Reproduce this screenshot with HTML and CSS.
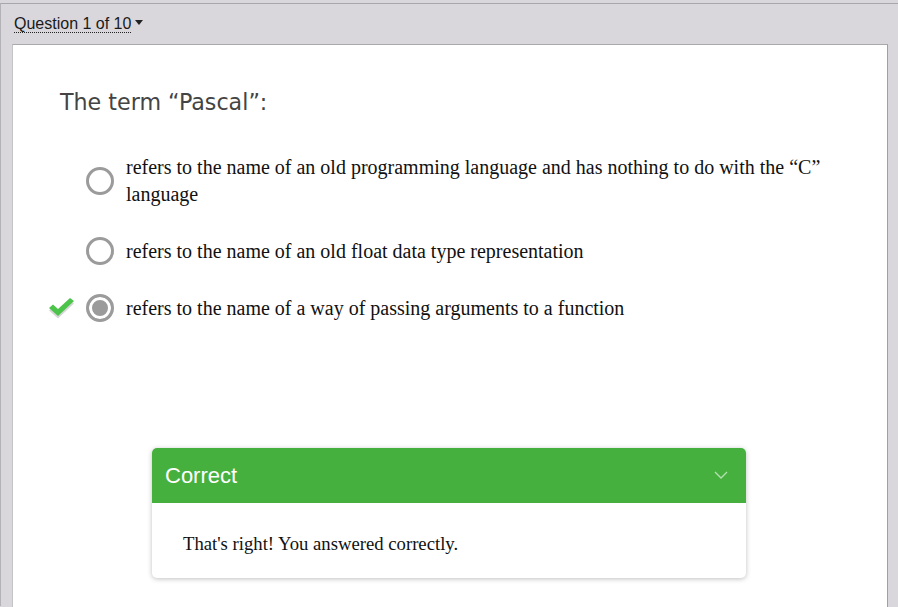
FILE: index.html
```html
<!DOCTYPE html>
<html>
<head>
<meta charset="utf-8">
<link rel="stylesheet" href="styles.css">
</head>
<body>
<div class="frame">
  <div class="topbar">
    <span class="qnav">Question 1 of 10</span><span class="caret"></span>
  </div>
  <div class="card">
    <h2 class="question">The term “Pascal”:</h2>
    <ul class="options">
      <li class="option">
        <span class="mark"></span>
        <span class="radio"></span>
        <span class="label">refers to the name of an old programming language and has nothing to do with the “C” language</span>
      </li>
      <li class="option">
        <span class="mark"></span>
        <span class="radio"></span>
        <span class="label">refers to the name of an old float data type representation</span>
      </li>
      <li class="option">
        <span class="mark">
          <svg width="28" height="24" viewBox="0 0 28 24">
            <path d="M1 12 L10 20 L26 5 L22 2 L10 13 L5 8.5 Z" fill="#d6d6d6" transform="translate(0,2.5)"/>
            <path d="M1 12 L10 20 L26 5 L22 2 L10 13 L5 8.5 Z" fill="#4cc34a"/>
          </svg>
        </span>
        <span class="radio checked"></span>
        <span class="label">refers to the name of a way of passing arguments to a function</span>
      </li>
    </ul>
    <div class="feedback">
      <div class="fb-head">
        <span class="fb-title">Correct</span>
        <svg class="chev" width="14" height="9" viewBox="0 0 14 9"><path d="M1 1 L7 7 L13 1" fill="none" stroke="#b5e0b0" stroke-width="1.3"/></svg>
      </div>
      <div class="fb-body">That's right! You answered correctly.</div>
    </div>
  </div>
</div>
</body>
</html>
```
FILE: styles.css
```css
html, body { margin: 0; padding: 0; }
body { width: 898px; height: 607px; overflow: hidden; background: #d9d7dc; }
.frame {
  margin-top: 3px;
  border-top: 1px solid #a8a8ab;
  border-left: 1px solid #b3b2b6;
  height: 603px;
  background: #d9d7dc;
  padding: 0 10px 0 11px;
  box-sizing: border-box;
}
.topbar {
  height: 40px;
  display: flex;
  align-items: center;
  padding-left: 2px;
  font-family: "Liberation Sans", Arial, sans-serif;
  font-size: 16px;
  color: #1a1a1a;
}
.qnav {
  border-bottom: 1px dotted #222;
  line-height: 17px;
}
.caret {
  display: inline-block;
  width: 0; height: 0;
  border-left: 4px solid transparent;
  border-right: 4px solid transparent;
  border-top: 5px solid #222;
  margin-left: 4px;
  margin-top: -3px;
}
.card {
  background: #fff;
  border-top: 1px solid #a9a9ac;
  border-left: 1px solid #c4c3c7;
  border-right: 1px solid #a0a0a3;
  height: 580px;
  box-sizing: border-box;
  padding: 44px 0 0 47px;
}
.question {
  margin: 0;
  font-family: "DejaVu Sans", Verdana, sans-serif;
  font-weight: normal;
  font-size: 22.2px;
  color: #444;
  line-height: 26px;
}
.options {
  list-style: none;
  margin: 39px 0 0 0;
  padding: 0;
}
.option {
  display: flex;
  align-items: center;
  margin-bottom: 29px;
  font-family: "Liberation Serif", "Times New Roman", serif;
  font-size: 20px;
  line-height: 27px;
  color: #111;
}
.option:last-child { margin-bottom: 0; }
.mark {
  width: 28px;
  height: 24px;
  margin-left: -12px;
  margin-right: 10px;
  display: flex;
}
.radio {
  width: 28px; height: 28px;
  box-sizing: border-box;
  border: 3px solid #9b9b9b;
  border-radius: 50%;
  background: #fff;
  flex: none;
  margin-right: 12px;
}
.radio.checked {
  background: #9b9b9b;
  box-shadow: inset 0 0 0 3px #fff;
}
.label { width: 715px; }
.feedback {
  margin: 126px 0 0 92px;
  width: 594px;
  border-radius: 5px;
  background: #fff;
  box-shadow: 0 1px 5px rgba(0,0,0,0.25);
  overflow: hidden;
}
.fb-head {
  background: #46b03f;
  height: 55px;
  display: flex;
  align-items: center;
  justify-content: space-between;
  padding: 0 18px 0 13px;
}
.fb-title {
  font-family: "Liberation Sans", Arial, sans-serif;
  font-size: 22px;
  color: #fff;
}
.fb-body {
  padding: 30px 31px 23px;
  font-family: "Liberation Serif", "Times New Roman", serif;
  font-size: 18.7px;
  line-height: 22px;
  color: #111;
}
```
